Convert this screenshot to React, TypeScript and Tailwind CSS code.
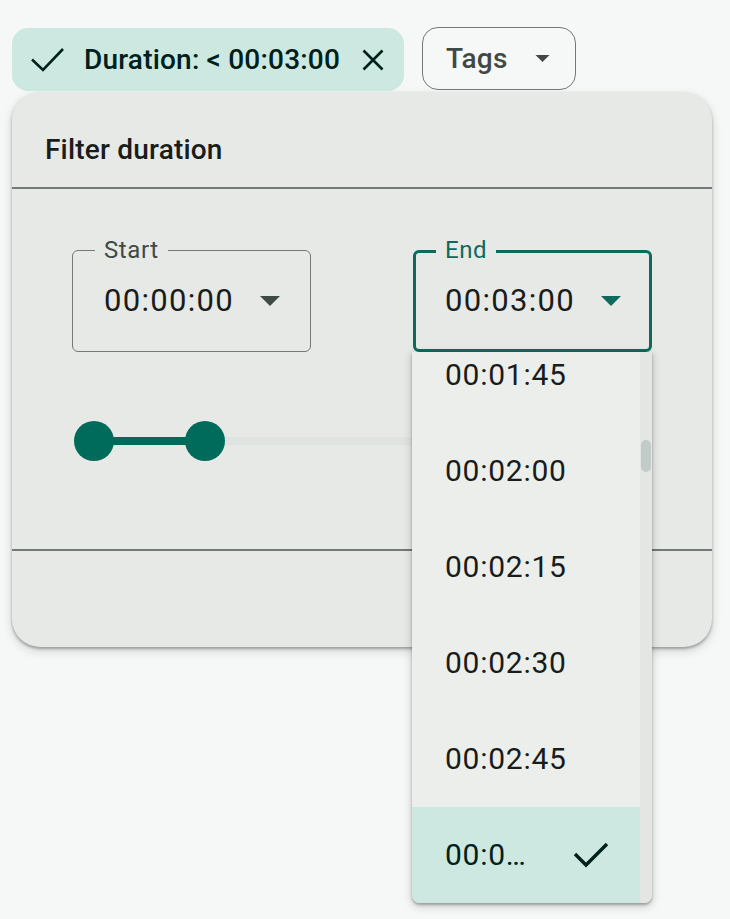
import React from "react";

const items = ["00:01:45", "00:02:00", "00:02:15", "00:02:30", "00:02:45", "00:03:00"];

function Caret({ className }: { className?: string }) {
  return (
    <svg viewBox="0 0 20 10" className={className} fill="currentColor">
      <path d="M0 0h20L10 10z" />
    </svg>
  );
}

function TimeField({ label, value, active }: { label: string; value: string; active?: boolean }) {
  return (
    <div
      className={
        active
          ? "relative h-[102px] rounded-[6px] border-[3px] border-[#0c6b5d] flex items-center pl-[29px] pr-[28px]"
          : "relative h-[102px] rounded-[6px] border-[1.5px] border-[#747a78] flex items-center pl-[31px] pr-[30px]"
      }
    >
      <span
        className={
          active
            ? "absolute left-[20px] top-[-19px] bg-[#e6e9e6] px-[9px] text-[24px] leading-[32px] tracking-[0.6px] text-[#0c6b5d]"
            : "absolute left-[22px] top-[-17px] bg-[#e6e9e6] px-[9px] text-[24px] leading-[32px] tracking-[0.6px] text-[#414946]"
        }
      >
        {label}
      </span>
      <span className="flex-1 text-[31px] leading-[40px] tracking-[1.3px] text-[#191c1b]">{value}</span>
      <Caret className={active ? "w-[20px] h-[10px] text-[#0c6b5d]" : "w-[20px] h-[10px] text-[#3f4946]"} />
    </div>
  );
}

export default function App() {
  return (
    <div className="relative min-h-screen bg-[#f6f8f7] font-[Roboto,sans-serif] text-[#191c1b]">
      <div className="flex items-start gap-[18px] pl-[12px] pt-[27px]">
        <div className="mt-[1px] flex h-[63px] items-center rounded-[16px] bg-[#cde8e0] pl-[19px] pr-[20px] text-[#00201b]">
          <svg viewBox="0 0 34 26" className="h-[26px] w-[34px]" fill="none" stroke="currentColor" strokeWidth="2.6">
            <path d="M1 12.5l11 10.5L32 2" />
          </svg>
          <span className="ml-[19px] text-[28px] font-medium leading-[36px] tracking-[0.2px]">Duration: &lt; 00:03:00</span>
          <svg viewBox="0 0 22 22" className="ml-[22px] h-[22px] w-[22px]" fill="none" stroke="currentColor" strokeWidth="2.6">
            <path d="M1.5 1.5l19 19M20.5 1.5l-19 19" />
          </svg>
        </div>
        <div className="flex h-[63px] items-center rounded-[16px] border-[1.5px] border-[#727978] pl-[23px] pr-[25px] text-[#414846]">
          <span className="text-[28px] font-medium leading-[36px] tracking-[0.2px]">Tags</span>
          <Caret className="ml-[27px] h-[7px] w-[15px]" />
        </div>
      </div>

      <div className="ml-[12px] mt-[1px] w-[700px] overflow-hidden rounded-[28px] bg-[#e6e9e6] shadow-[0_2px_3px_rgba(0,0,0,0.3),0_4px_8px_2px_rgba(0,0,0,0.1)]">
        <div className="h-[95px] pl-[33px] pt-[40px]">
          <div className="text-[28px] font-medium leading-[36px] tracking-[0.2px] text-[#191c1b]">Filter duration</div>
        </div>
        <div className="h-[2px] bg-[#737977]" />
        <div className="h-[360px] px-[60px] pt-[61px]">
          <div className="grid grid-cols-2 gap-[102px]">
            <TimeField label="Start" value="00:00:00" />
            <TimeField label="End" value="00:03:00" active />
          </div>
          <div className="relative ml-[2px] mt-[69px] h-[40px] w-[577px]">
            <div className="absolute left-[130px] right-0 top-[16px] h-[8px] rounded-full bg-[#dfe4e1]" />
            <div className="absolute left-[20px] top-[16px] h-[8px] w-[111px] bg-[#006a5b]" />
            <div className="absolute left-0 top-0 h-[40px] w-[40px] rounded-full bg-[#006a5b]" />
            <div className="absolute left-[111px] top-0 h-[40px] w-[40px] rounded-full bg-[#006a5b]" />
          </div>
        </div>
        <div className="h-[2px] bg-[#737977]" />
        <div className="h-[96px]" />
      </div>

      <div className="absolute left-[412px] top-[352px] flex h-[551px] w-[240px] overflow-hidden rounded-b-[8px] bg-[#eceeeb] shadow-[0_2px_3px_rgba(0,0,0,0.3),0_3px_8px_2px_rgba(0,0,0,0.12)]">
        <div className="w-[228px] overflow-hidden">
          <div className="-mt-[25px]">
            {items.map((t) => {
              const sel = t === "00:03:00";
              return (
                <div
                  key={t}
                  className={
                    sel
                      ? "flex h-[96px] items-center bg-[#cde8e0] pl-[33px] text-[#00201b]"
                      : "flex h-[96px] items-center pl-[33px] text-[#191c1b]"
                  }
                >
                  <span
                    className={
                      sel
                        ? "w-[96px] truncate text-[30px] leading-[40px] tracking-[0.75px]"
                        : "whitespace-nowrap text-[30px] leading-[40px] tracking-[0.75px]"
                    }
                  >
                    {t}
                  </span>
                  {sel && (
                    <svg viewBox="0 0 36 28" className="ml-[32px] h-[28px] w-[36px]" fill="none" stroke="currentColor" strokeWidth="3.4">
                      <path d="M2 13l11 11L34 3" />
                    </svg>
                  )}
                </div>
              );
            })}
          </div>
        </div>
        <div className="relative w-[12px] bg-[#e3e6e3]">
          <div className="absolute left-[1px] top-[88px] h-[32px] w-[10px] rounded-full bg-[#c1cbc7]" />
        </div>
      </div>
    </div>
  );
}
